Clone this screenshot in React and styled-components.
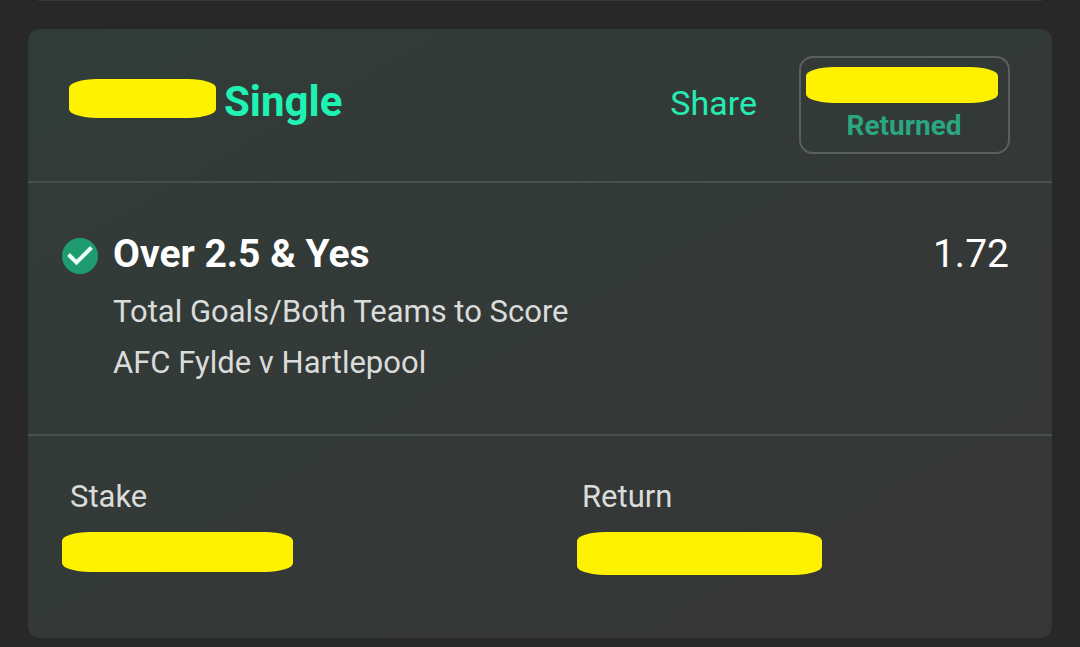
import React from 'react';
import styled, { createGlobalStyle } from 'styled-components';

const GlobalStyle = createGlobalStyle`
  * {
    box-sizing: border-box;
  }
  body {
    margin: 0;
    background: #282828;
    font-family: Roboto, "Liberation Sans", sans-serif;
    color: #fff;
  }
`;

const Page = styled.main`
  padding: 0 28px 8px;
`;

// bottom edge of the slip that is scrolled out of view
const PreviousSlip = styled.div`
  height: 1px;
  margin: 0 10px 28px;
  background: #363838;
`;

const Slip = styled.article`
  border-radius: 12px;
  background: linear-gradient(150deg, #313c38 0%, #333937 50%, #363636 90%);
`;

const SlipHeader = styled.header`
  display: flex;
  align-items: center;
  padding: 27px 42px 27px 41px;
`;

const SlipTitle = styled.h1`
  display: flex;
  align-items: flex-start;
  gap: 8px;
  margin: 0;
  padding-bottom: 7px;
  font-size: 42px;
  line-height: 45px;
  font-weight: 700;
  color: #1ff2b3;
`;

const Redacted = styled.span`
  display: block;
  width: ${(p) => p.$width}px;
  height: ${(p) => p.$height}px;
  border-radius: 28px / 9px;
  background: #fff200;
`;

const ShareButton = styled.button`
  margin-left: auto;
  margin-right: 42px;
  padding: 0 0 4px;
  border: 0;
  background: none;
  font: inherit;
  font-size: 34px;
  line-height: 40px;
  color: #26ebb1;
  cursor: pointer;
`;

const ReturnedButton = styled.button`
  display: flex;
  flex-direction: column;
  align-items: flex-start;
  padding: 9px 10px 4px 5px;
  border: 2px solid #5a605e;
  border-radius: 14px;
  background: none;
  font: inherit;
  cursor: pointer;
`;

const ReturnedLabel = styled.span`
  align-self: center;
  padding-left: 4px;
  font-size: 28px;
  line-height: 45px;
  font-weight: 700;
  color: #2aa681;
`;

const Selection = styled.section`
  display: flex;
  align-items: flex-start;
  padding: 47px 43px 46px 34px;
  border-top: 2px solid #47504d;
  border-bottom: 2px solid #47504d;
`;

const WonIcon = styled.svg`
  flex: none;
  width: 36px;
  height: 36px;
  margin: 8px 15px 0 0;
`;

const SelectionInfo = styled.div`
  flex: 1;
`;

const SelectionName = styled.h2`
  margin: 0 0 8px;
  font-size: 39px;
  line-height: 48px;
  font-weight: 700;
`;

const SelectionDetail = styled.p`
  margin: 0;
  font-size: 31px;
  line-height: 51px;
  color: #dadcdb;
`;

const Odds = styled.span`
  font-size: 39px;
  line-height: 48px;
`;

const Totals = styled.dl`
  display: grid;
  grid-template-columns: 1fr 1fr;
  margin: 0;
  padding: 41px 0 63px;
`;

const Total = styled.div`
  padding-left: 34px;
`;

const TotalLabel = styled.dt`
  padding-left: 8px;
  font-size: 31px;
  line-height: 40px;
  color: #dadcdb;
`;

const TotalValue = styled.dd`
  margin: 15px 0 0;
  padding-left: ${(p) => (p.$indent ? 3 : 0)}px;
`;

const App = () => {
  const totals = [
    { label: 'Stake', width: 231, height: 40 },
    { label: 'Return', width: 245, height: 43, indent: true },
  ];

  return (
    <Page>
      <GlobalStyle />
      <PreviousSlip />
      <Slip>
        <SlipHeader>
          <SlipTitle>
            <Redacted $width={147} $height={39} />
            Single
          </SlipTitle>
          <ShareButton type="button">Share</ShareButton>
          <ReturnedButton type="button">
            <Redacted $width={192} $height={36} />
            <ReturnedLabel>Returned</ReturnedLabel>
          </ReturnedButton>
        </SlipHeader>

        <Selection>
          <WonIcon viewBox="0 0 36 36" role="img" aria-label="Won">
            <circle cx="18" cy="18" r="18" fill="#1e9c70" />
            <path d="M6.5 16.5 L14.5 24.5 L29.5 9.5" fill="none" stroke="#e9fff6" strokeWidth="4" />
          </WonIcon>
          <SelectionInfo>
            <SelectionName>Over 2.5 &amp; Yes</SelectionName>
            <SelectionDetail>Total Goals/Both Teams to Score</SelectionDetail>
            <SelectionDetail>AFC Fylde v Hartlepool</SelectionDetail>
          </SelectionInfo>
          <Odds>1.72</Odds>
        </Selection>

        <Totals>
          {totals.map((t) => (
            <Total key={t.label}>
              <TotalLabel>{t.label}</TotalLabel>
              <TotalValue $indent={t.indent}>
                <Redacted $width={t.width} $height={t.height} />
              </TotalValue>
            </Total>
          ))}
        </Totals>
      </Slip>
    </Page>
  );
};

export default App;
